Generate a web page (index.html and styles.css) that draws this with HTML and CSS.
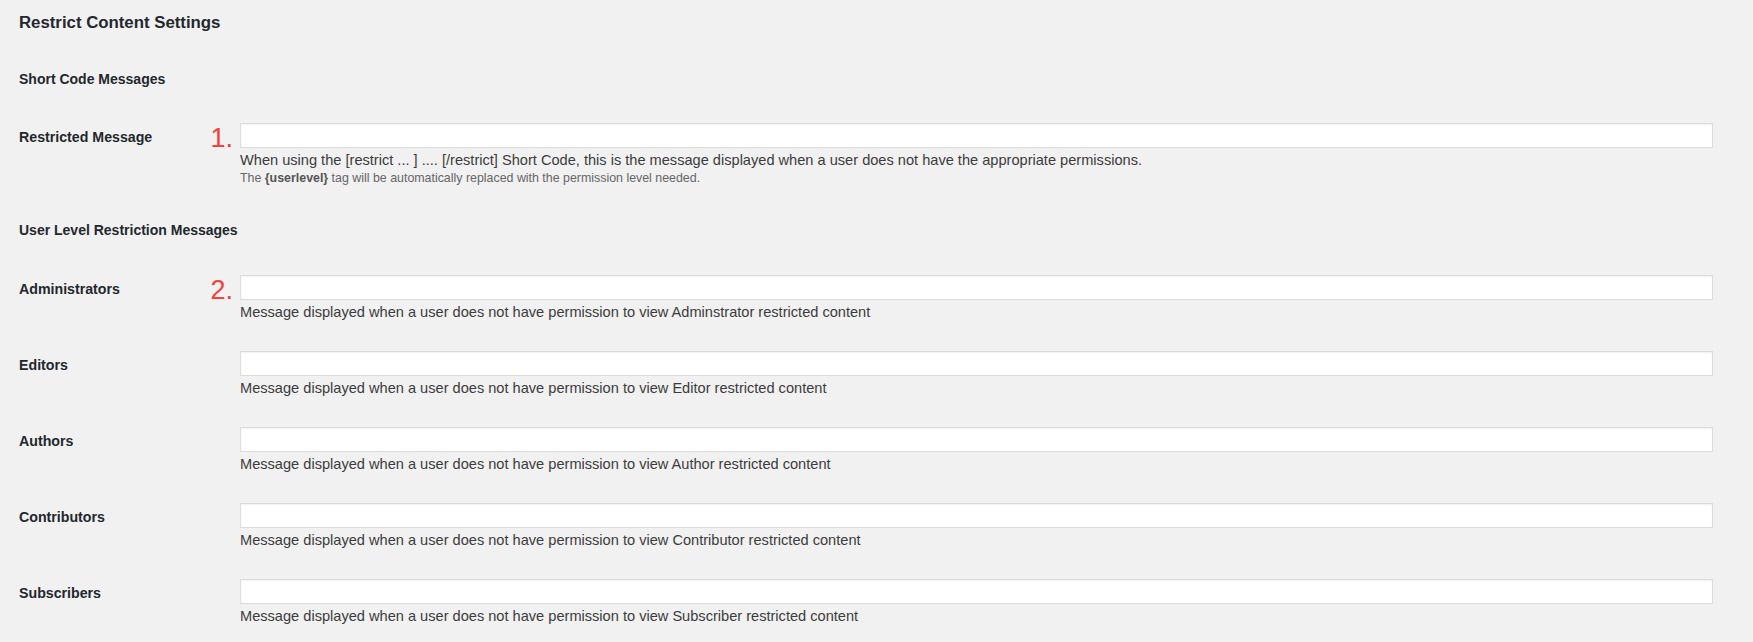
FILE: index.html
```html
<!DOCTYPE html>
<html lang="en">
<head>
<meta charset="utf-8">
<title>Restrict Content Settings</title>
<link rel="stylesheet" href="styles.css">
</head>
<body>
<main class="page">
  <h1 class="title">Restrict Content Settings</h1>

  <section class="section">
    <h2 class="section-title">Short Code Messages</h2>
    <div class="row">
      <label class="row-label">Restricted Message</label>
      <div class="field">
        <div class="input-wrap"><span class="marker">1.</span><input class="text-input" type="text"></div>
        <p class="desc">When using the [restrict ... ] .... [/restrict] Short Code, this is the message displayed when a user does not have the appropriate permissions.</p>
        <p class="note">The <strong>{userlevel}</strong> tag will be automatically replaced with the permission level needed.</p>
      </div>
    </div>
  </section>

  <section class="section">
    <h2 class="section-title">User Level Restriction Messages</h2>
    <div class="rows">
      <div class="row">
        <label class="row-label">Administrators</label>
        <div class="field">
          <div class="input-wrap"><span class="marker">2.</span><input class="text-input" type="text"></div>
          <p class="desc">Message displayed when a user does not have permission to view Adminstrator restricted content</p>
        </div>
      </div>
      <div class="row">
        <label class="row-label">Editors</label>
        <div class="field">
          <div class="input-wrap"><input class="text-input" type="text"></div>
          <p class="desc">Message displayed when a user does not have permission to view Editor restricted content</p>
        </div>
      </div>
      <div class="row">
        <label class="row-label">Authors</label>
        <div class="field">
          <div class="input-wrap"><input class="text-input" type="text"></div>
          <p class="desc">Message displayed when a user does not have permission to view Author restricted content</p>
        </div>
      </div>
      <div class="row">
        <label class="row-label">Contributors</label>
        <div class="field">
          <div class="input-wrap"><input class="text-input" type="text"></div>
          <p class="desc">Message displayed when a user does not have permission to view Contributor restricted content</p>
        </div>
      </div>
      <div class="row">
        <label class="row-label">Subscribers</label>
        <div class="field">
          <div class="input-wrap"><input class="text-input" type="text"></div>
          <p class="desc">Message displayed when a user does not have permission to view Subscriber restricted content</p>
        </div>
      </div>
    </div>
  </section>
</main>
</body>
</html>
```
FILE: styles.css
```css
html, body {
  margin: 0;
  padding: 0;
  background: #f1f1f1;
}

body {
  font-family: "Liberation Sans", Arial, Helvetica, sans-serif;
  color: #23282d;
}

.page {
  padding: 11px 40px 0 19px;
}

.title {
  margin: 0 0 34px;
  font-size: 16.8px;
  line-height: 24px;
  font-weight: 700;
  color: #23282d;
}

.section + .section {
  margin-top: 34px;
}

.section-title {
  margin: 0 0 34px;
  font-size: 14px;
  line-height: 20px;
  font-weight: 700;
  color: #23282d;
}

.section + .section .section-title {
  margin-bottom: 35px;
}

.rows {
  display: flex;
  flex-direction: column;
  gap: 29px;
}

.row {
  display: grid;
  grid-template-columns: 221px 1fr;
  align-items: start;
}

.row-label {
  padding-top: 2px;
  font-size: 14.2px;
  line-height: 25px;
  font-weight: 700;
  color: #23282d;
}

.field {
  min-width: 0;
}

.input-wrap {
  position: relative;
}

.marker {
  position: absolute;
  right: calc(100% + 7px);
  bottom: -4px;
  font-size: 27px;
  line-height: 27px;
  color: #f5403a;
  white-space: nowrap;
}

.text-input {
  display: block;
  box-sizing: border-box;
  width: 100%;
  height: 25px;
  margin: 0;
  padding: 2px 6px;
  border: 1px solid #dcdcdc;
  border-radius: 0;
  background: #fff;
  box-shadow: inset 0 1px 2px rgba(0, 0, 0, 0.06);
  font: inherit;
  font-size: 14px;
}

.desc {
  margin: 2px 0 0;
  font-size: 14.6px;
  line-height: 20px;
  color: #3c3c3c;
}

.note {
  margin: 0;
  font-size: 12.4px;
  line-height: 16px;
  color: #666;
}

.note strong {
  font-weight: 700;
  color: #555;
}
```
